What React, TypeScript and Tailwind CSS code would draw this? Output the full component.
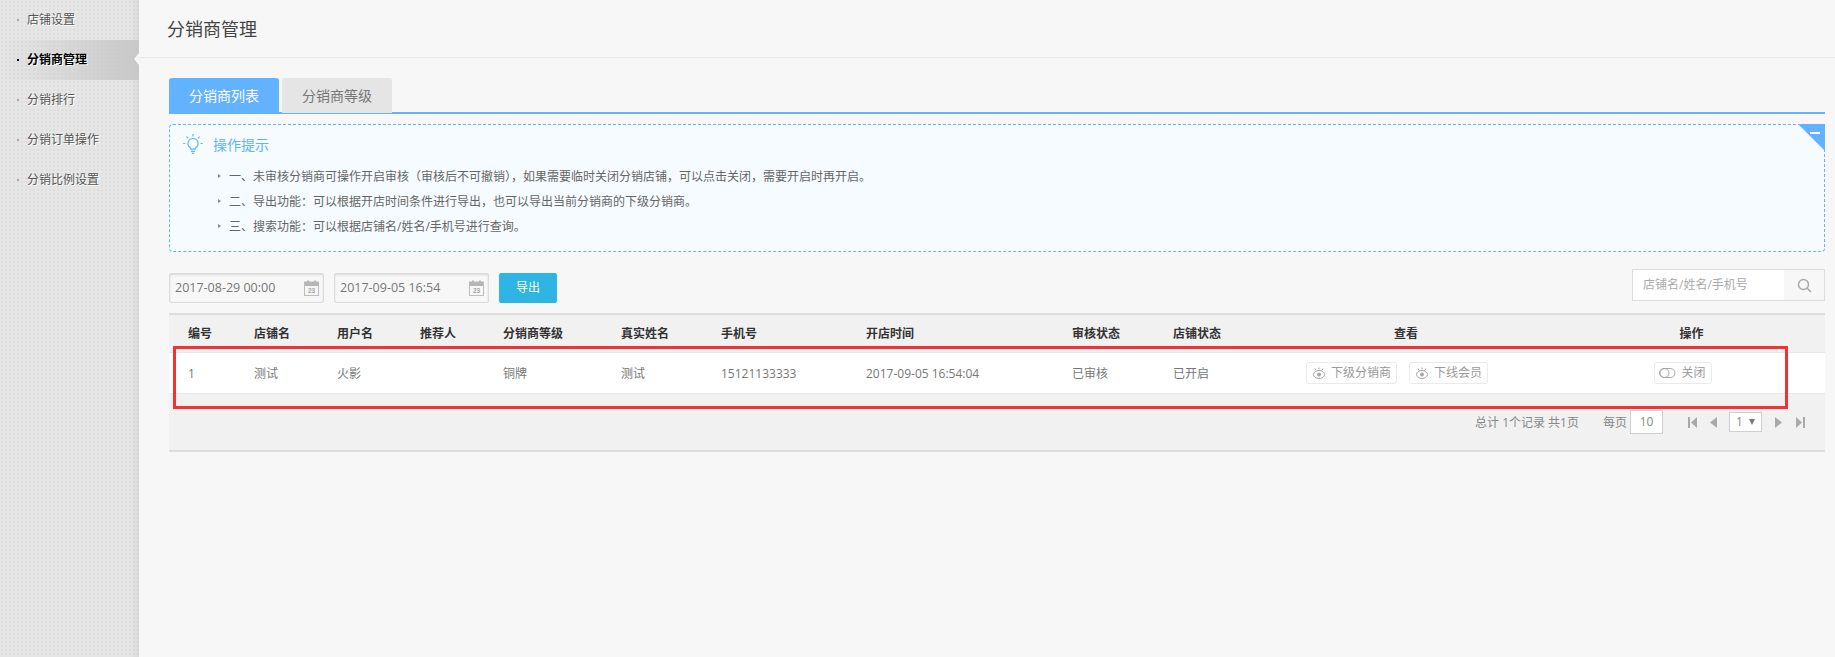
import React from "react";

const FONT = "[font-family:'Open_Sans','Noto_Sans_CJK_SC',sans-serif]";

function Eye() {
  return (
    <svg width="14" height="14" viewBox="0 0 14 14" fill="none" stroke="#a8a8a8" strokeWidth="1" className="shrink-0">
      <ellipse cx="7" cy="8.5" rx="5.5" ry="4" />
      <circle cx="7" cy="8.5" r="2" fill="#a8a8a8" stroke="none" />
      <path d="M7 1.5v2M3 2.5l1.2 2M11 2.5l-1.2 2" />
    </svg>
  );
}

function Toggle() {
  return (
    <svg width="17" height="12" viewBox="0 0 17 12" fill="none" stroke="#a8a8a8" strokeWidth="1" className="shrink-0">
      <rect x="0.5" y="1.5" width="15.5" height="9" rx="4.5" />
      <circle cx="5.5" cy="6" r="4.5" />
    </svg>
  );
}

function Bulb() {
  return (
    <svg width="20" height="21" viewBox="0 0 20 21" fill="none" stroke="#62b2ff" strokeWidth="1.2">
      <path d="M10 4.5a5 5 0 0 0-3 9c.6.5.8 1 .8 1.7h4.4c0-.7.2-1.2.8-1.7a5 5 0 0 0-3-9Z" />
      <path d="M8 17.3h4M8.8 19.4h2.4M10 0v2.4M3.4 2.6l1.5 1.6M16.6 2.6l-1.5 1.6M.2 9.5h2.2M17.6 9.5h2.2" />
    </svg>
  );
}

function Calendar() {
  return (
    <svg width="15" height="16" viewBox="0 0 15 16" className="shrink-0">
      <rect x="0.5" y="2" width="14" height="13.5" fill="#f7f7f7" stroke="#bdbdbd" />
      <rect x="0.5" y="2" width="14" height="4" fill="#b5b5b5" />
      <rect x="3" y="0.5" width="2" height="3" fill="#b5b5b5" />
      <rect x="10" y="0.5" width="2" height="3" fill="#b5b5b5" />
      <text x="7.5" y="13" fontSize="6.5" textAnchor="middle" fill="#a5a5a5" fontFamily="'Liberation Sans',sans-serif" fontWeight="700">23</text>
    </svg>
  );
}

function Pager({ dir, bar }: { dir: "l" | "r"; bar?: boolean }) {
  return (
    <svg width="9" height="11" viewBox="0 0 9 11" fill="#a9a9a9">
      {dir === "l" ? <path d={bar ? "M9 0v11L3 5.5ZM0 0h2v11H0Z" : "M8 0v11L1 5.5Z"} /> : <path d={bar ? "M0 0v11l6-5.5ZM7 0h2v11H7Z" : "M1 0v11l7-5.5Z"} />}
    </svg>
  );
}

function DateBox({ value, className }: { value: string; className: string }) {
  return (
    <div className={`h-[30px] flex items-center justify-between pl-[5px] pr-[4px] border border-[#dcdcdc] rounded-[2px] bg-[#f7f7f7] shadow-[inset_0_1px_2px_rgba(0,0,0,0.12)] text-[12.5px] text-[#777] ${className}`}>
      <span>{value}</span>
      <Calendar />
    </div>
  );
}

function Ghost({ icon, label, className }: { icon: React.ReactNode; label: string; className: string }) {
  return (
    <div className={`h-[22px] flex items-center justify-center gap-[5px] border border-[#eaeaea] rounded-[3px] bg-white text-[12px] text-[#999] ${className}`}>
      {icon}
      <span>{label}</span>
    </div>
  );
}

const COLS = "grid grid-cols-[85px_83px_83px_83px_118px_100px_145px_206px_101px_99px_268px_285px]";
const HEADERS = ["编号", "店铺名", "用户名", "推荐人", "分销商等级", "真实姓名", "手机号", "开店时间", "审核状态", "店铺状态"];
const CELLS = ["1", "测试", "火影", "", "铜牌", "测试", "15121133333", "2017-09-05 16:54:04", "已审核", "已开启"];
const MENU = ["店铺设置", "分销商管理", "分销排行", "分销订单操作", "分销比例设置"];
const TIPS = [
  "一、未审核分销商可操作开启审核（审核后不可撤销），如果需要临时关闭分销店铺，可以点击关闭，需要开启时再开启。",
  "二、导出功能：可以根据开店时间条件进行导出，也可以导出当前分销商的下级分销商。",
  "三、搜索功能：可以根据店铺名/姓名/手机号进行查询。",
];

export default function App() {
  return (
    <div className={`${FONT} w-[1835px] h-[657px] flex overflow-hidden bg-[#f7f7f7] text-[12px]`}>
      <aside className="w-[139px] shrink-0 h-full bg-[#e6e6e6] bg-[radial-gradient(circle,#dedede_1px,transparent_1px)] [background-size:4px_4px] shadow-[inset_-8px_0_8px_-6px_rgba(0,0,0,0.08)]">
        {MENU.map((m, i) => (
          <div key={m} className={`relative h-[40px] flex items-center pl-[17px] pb-[1px] ${i === 1 ? "bg-gradient-to-r from-transparent to-[#c8c8c8] text-black font-bold" : "text-[#555]"} [text-shadow:1px_1px_0_#fff]`}>
            <span className={`w-[2px] h-[2px] mr-[8px] ${i === 1 ? "bg-black" : "bg-[#aaa]"}`} />
            {m}
            {i === 1 && <span className="absolute right-0 top-[13px] border-y-[6px] border-r-[5px] border-y-transparent border-r-[#f7f7f7]" />}
          </div>
        ))}
      </aside>

      <main className="flex-1 min-w-0 relative">
        <header className="h-[58px] border-b border-[#e8e8e8] pl-[28px] pt-[16px] text-[18px] leading-[26px] text-[#444]">分销商管理</header>

        <div className="pl-[30px] pr-[10px] pt-[20px]">
          <div className="flex gap-[3px] h-[36px] border-b-2 border-[#62b2ff] text-[14px]">
            <div className="w-[110px] h-[35px] flex items-center justify-center rounded-t-[3px] bg-[#62b2ff] text-white">分销商列表</div>
            <div className="w-[110px] h-[35px] flex items-center justify-center rounded-t-[3px] bg-[#e5e5e5] text-[#777]">分销商等级</div>
          </div>

          <section className="relative mt-[10px] h-[128px] border border-dashed border-[#62b2ff] rounded-[4px] bg-[#f5fbff]">
            <div className="flex items-center h-[21px] mt-[9px] ml-[13px] gap-[10px] text-[14px] text-[#62b2ff]">
              <Bulb />
              <span>操作提示</span>
            </div>
            <ul className="mt-[9px] pl-[59px] text-[#666]">
              {TIPS.map((t) => (
                <li key={t} className="relative h-[25px] flex items-center">
                  <span className="absolute left-[-11px] top-[10px] border-y-[2.5px] border-l-[3px] border-y-transparent border-l-[#888]" />
                  {t}
                </li>
              ))}
            </ul>
            <span className="absolute top-[-1px] right-[-1px] border-t-[27px] border-l-[27px] border-t-[#62b2ff] border-l-transparent" />
            <span className="absolute top-[7px] right-[4px] w-[10px] h-[2px] bg-white" />
          </section>

          <div className="flex items-start justify-between mt-[17px] h-[44px]">
            <div className="flex items-center pt-[4px]">
              <DateBox value="2017-08-29 00:00" className="w-[155px]" />
              <DateBox value="2017-09-05 16:54" className="w-[155px] ml-[10px]" />
              <button className="w-[58px] h-[30px] ml-[10px] rounded-[2px] bg-[#2fb5e4] text-white text-[12px]">导出</button>
            </div>
            <div className="w-[193px] h-[32px] flex border border-[#dddddd]">
              <div className="w-[151px] bg-white pl-[10px] flex items-center text-[#aaa]">店铺名/姓名/手机号</div>
              <div className="flex-1 flex items-center justify-center">
                <svg width="15" height="15" viewBox="0 0 15 15" fill="none" stroke="#a9a9a9" strokeWidth="1.5"><circle cx="6.5" cy="6.5" r="5" /><path d="m10.2 10.2 3.8 3.8" /></svg>
              </div>
            </div>
          </div>

          <div className="border-y-2 border-[#dddddd] bg-[#f1f1f1] h-[139px]">
            <div className={`${COLS} h-[38px] items-center border-b border-[#e8e8e8] text-[#333] font-bold`}>
              {HEADERS.map((h, i) => (
                <div key={h} className={i === 0 ? "pl-[19px]" : ""}>{h}</div>
              ))}
              <div className="text-center">查看</div>
              <div className="text-center pl-[18px]">操作</div>
            </div>
            <div className={`${COLS} h-[41px] items-center bg-white border-b border-[#e8e8e8] text-[#777]`}>
              {CELLS.map((c, i) => (
                <div key={i} className={`pt-[1px] ${i === 0 ? "pl-[19px]" : ""}`}>{c}</div>
              ))}
              <div className="flex justify-center">
                <div className="flex gap-[12px] mr-[18px]">
                  <Ghost icon={<Eye />} label="下级分销商" className="w-[91px]" />
                  <Ghost icon={<Eye />} label="下线会员" className="w-[79px]" />
                </div>
              </div>
              <div className="flex justify-center pl-[18px]">
                <Ghost icon={<Toggle />} label="关闭" className="w-[58px] mr-[18px]" />
              </div>
            </div>
            <div className="flex items-center justify-end h-[24px] mt-[16px] text-[#888] pr-[20px]">
              <span className="pt-[1px]">总计 1个记录 共1页</span>
              <span className="ml-[24px] pt-[1px]">每页</span>
              <div className="w-[33px] h-[24px] ml-[3px] flex items-center justify-center border border-[#cfcfcf] bg-white">10</div>
              <div className="ml-[25px] flex items-center gap-[12px]">
                <Pager dir="l" bar />
                <Pager dir="l" />
              </div>
              <div className="w-[33px] h-[20px] ml-[11px] flex items-center justify-center gap-[6px] border border-[#cfcfcf] bg-white">
                <span>1</span>
                <span className="border-x-[3px] border-t-[6px] border-x-transparent border-t-[#777]" />
              </div>
              <div className="ml-[12px] flex items-center gap-[13px]">
                <Pager dir="r" />
                <Pager dir="r" bar />
              </div>
            </div>
          </div>
        </div>

        <div className="absolute left-[34px] top-[346px] w-[1615px] h-[63px] border-[3px] border-[#f33333] pointer-events-none" />
      </main>
    </div>
  );
}
